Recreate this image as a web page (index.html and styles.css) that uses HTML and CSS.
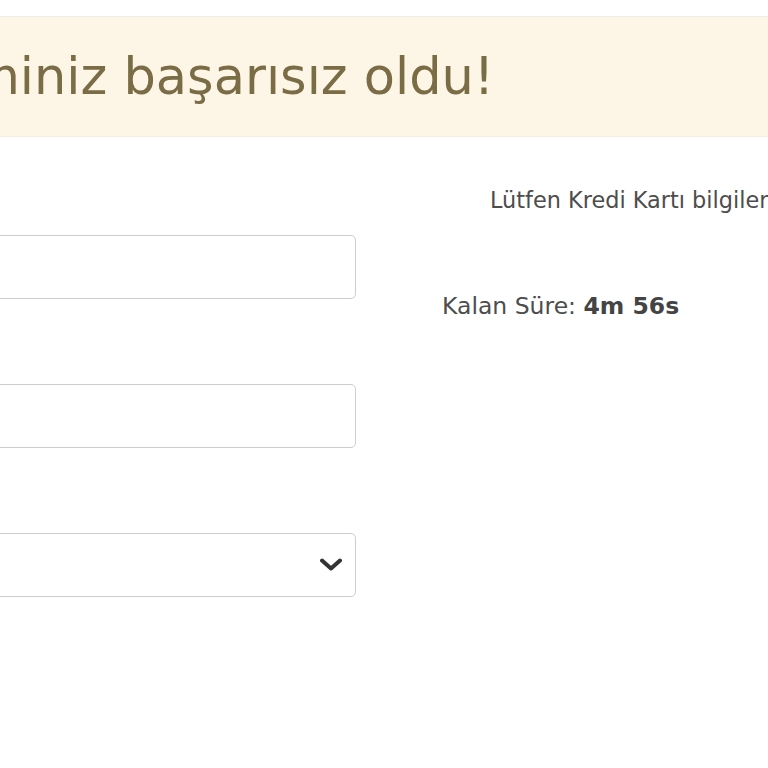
FILE: index.html
```html
<!DOCTYPE html>
<html lang="tr">
<head>
<meta charset="utf-8">
<title>Ödeme</title>
<link rel="stylesheet" href="styles.css">
</head>
<body>
<div class="page">
  <div class="alert">
    <h2 class="alert-title">İşleminiz başarısız oldu!</h2>
  </div>
  <div class="content">
    <div class="form">
      <div class="field"><input class="input" type="text"></div>
      <div class="field"><input class="input" type="text"></div>
      <div class="field">
        <div class="select">
          <svg class="chevron" width="24" height="14" viewBox="0 0 24 14"><polyline points="3,2.5 12,10.5 21,2.5" fill="none" stroke="#333" stroke-width="4" stroke-linecap="round" stroke-linejoin="round"/></svg>
        </div>
      </div>
    </div>
    <div class="info">
      <p class="hint">Lütfen Kredi Kartı bilgilerinizi giriniz</p>
      <p class="timer">Kalan Süre: <b>4m 56s</b></p>
    </div>
  </div>
</div>
</body>
</html>
```
FILE: styles.css
```css
html, body {
  margin: 0;
  padding: 0;
  background: #ffffff;
}
.page {
  width: 768px;
  height: 768px;
  overflow: hidden;
  font-family: "DejaVu Sans", "Noto Sans", sans-serif;
}
.alert {
  margin-top: 16px;
  height: 119px;
  background: #fdf6e7;
  border-top: 1px solid #f1ede3;
  border-bottom: 1px solid #f4efe4;
  display: flex;
  align-items: center;
}
.alert-title {
  margin: 0 0 0 -117px;
  font-size: 51px;
  font-weight: 400;
  color: #7a6d45;
  white-space: nowrap;
}
.content {
  display: flex;
  margin-top: 98px;
}
.form {
  margin-left: -200px;
  width: 556px;
  flex: none;
  display: flex;
  flex-direction: column;
  gap: 85px;
}
.field {
  display: flex;
}
.input, .select {
  box-sizing: border-box;
  width: 556px;
  height: 64px;
  border: 1.5px solid #cdcdcd;
  border-radius: 5px;
  background: #fff;
  margin: 0;
}
.select {
  display: flex;
  align-items: center;
  justify-content: flex-end;
  padding-right: 12px;
}
.info {
  flex: none;
  white-space: nowrap;
  color: #4d4d4d;
}
.hint {
  font-size: 22.4px;
  margin: -48px 0 0 134px;
}
.timer {
  font-size: 23.5px;
  margin: 79px 0 0 86px;
}
.timer b {
  color: #444;
}
```
